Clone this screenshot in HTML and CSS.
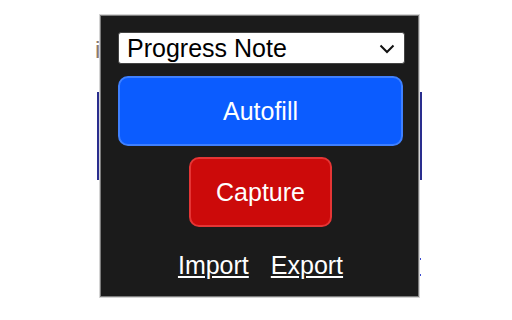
FILE: index.html
```html
<!DOCTYPE html>
<html>
<head>
<meta charset="utf-8">
<link rel="stylesheet" href="styles.css">
</head>
<body>
<div class="page">
  <div class="frag-i">i</div>
  <div class="band"></div>
  <div class="frag-q"></div>
</div>
<div class="popup">
  <div class="select-wrap">
    <select class="template">
      <option>Progress Note</option>
    </select>
    <svg class="chev" width="16" height="10" viewBox="0 0 16 10"><path d="M1.5 1.5 L8 8 L14.5 1.5" fill="none" stroke="#111" stroke-width="2"/></svg>
  </div>
  <button class="btn autofill">Autofill</button>
  <button class="btn capture">Capture</button>
  <div class="links">
    <a href="#" class="link">Import</a>
    <a href="#" class="link">Export</a>
  </div>
</div>
</body>
</html>
```
FILE: styles.css
```css
html, body {
  margin: 0;
  padding: 0;
  background: #ffffff;
  width: 512px;
  height: 320px;
  overflow: hidden;
  font-family: "Liberation Sans", Arial, sans-serif;
}
.page {
  position: relative;
  width: 512px;
  height: 320px;
}
.frag-i {
  position: absolute;
  left: 95px;
  top: 36px;
  font-size: 24px;
  color: #8a7a6c;
}
.band {
  position: absolute;
  left: 97px;
  top: 92px;
  width: 325px;
  height: 88px;
  background: #2a2e8e;
}
.frag-q {
  position: absolute;
  left: 418px;
  top: 258px;
  width: 3px;
  height: 18px;
  border-top: 2px solid #3a4ad0;
  border-bottom: 2px solid #3a4ad0;
  box-sizing: border-box;
}
.popup {
  position: absolute;
  left: 100px;
  top: 15px;
  width: 317px;
  height: 280px;
  background: #1b1b1b;
  border: 1px solid #7c7c7c;
  box-shadow: 0 0 0 1px #d4d4d4;
  padding: 16px 13px 0 17px;
  box-sizing: content-box;
}
.popup {
  width: 287px;
  height: 264px;
}
.select-wrap {
  position: relative;
  width: 287px;
  height: 32px;
}
.template {
  appearance: none;
  -webkit-appearance: none;
  width: 287px;
  height: 32px;
  margin: 0;
  padding: 0 0 0 8px;
  border: 1px solid #444;
  border-radius: 3px;
  background: #ffffff;
  color: #000;
  font-family: "Liberation Sans", Arial, sans-serif;
  font-size: 25px;
  line-height: 30px;
}
.chev {
  position: absolute;
  right: 10px;
  top: 12px;
}
.btn {
  display: block;
  margin: 0;
  font-family: "Liberation Sans", Arial, sans-serif;
  font-size: 25px;
  color: #ffffff;
  height: 70px;
  border-radius: 10px;
  cursor: pointer;
}
.autofill {
  width: 285px;
  margin-top: 12px;
  background: #0b5cff;
  border: 2px solid #3f80ff;
}
.capture {
  width: 143px;
  margin: 11px auto 0 71px;
  background: #cc0a0a;
  border: 2px solid #e53535;
}
.links {
  display: flex;
  justify-content: center;
  gap: 22px;
  margin-top: 24px;
  width: 285px;
  line-height: 29px;
}
.link {
  color: #ffffff;
  font-size: 25px;
  text-decoration: underline;
  text-underline-offset: 2px;
}
```
